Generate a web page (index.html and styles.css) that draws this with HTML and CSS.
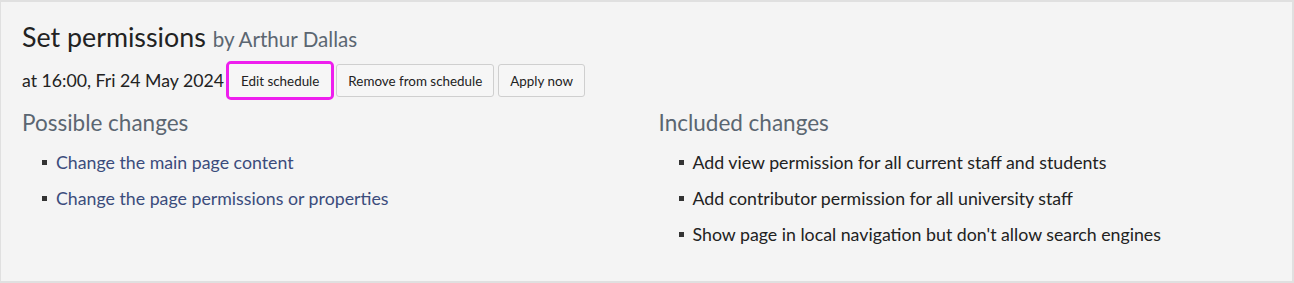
FILE: index.html
```html
<!DOCTYPE html>
<html lang="en">
<head>
<meta charset="utf-8">
<title>Set permissions</title>
<link rel="stylesheet" href="styles.css">
</head>
<body>
<div class="panel">
  <h1 class="title">Set permissions <span class="by">by Arthur Dallas</span></h1>
  <div class="schedule">
    <span class="when">at 16:00, Fri 24 May 2024</span>
    <span class="highlight"><button class="btn">Edit schedule</button></span>
    <button class="btn">Remove from schedule</button>
    <button class="btn">Apply now</button>
  </div>
  <div class="columns">
    <section class="col">
      <h2 class="col-title">Possible changes</h2>
      <ul class="changes">
        <li><a href="#" class="link">Change the main page content</a></li>
        <li><a href="#" class="link">Change the page permissions or properties</a></li>
      </ul>
    </section>
    <section class="col">
      <h2 class="col-title">Included changes</h2>
      <ul class="changes">
        <li>Add view permission for all current staff and students</li>
        <li>Add contributor permission for all university staff</li>
        <li>Show page in local navigation but don't allow search engines</li>
      </ul>
    </section>
  </div>
</div>
</body>
</html>
```

FILE: styles.css
```css
* { box-sizing: border-box; }
html, body { margin: 0; padding: 0; }
body {
  font-family: Lato, "Open Sans", "Liberation Sans", sans-serif;
  color: #222;
  background: #f4f4f4;
}
.panel {
  height: 283px;
  border: 2px solid #e0e0e0;
  border-left-width: 1px;
  background: #f4f4f4;
  padding: 19px 21px 0 21px;
}
.title {
  margin: 0;
  font-size: 26.8px;
  font-weight: 400;
  line-height: 32px;
  color: #222;
}
.by {
  font-size: 20.6px;
  color: #5b6671;
}
.schedule {
  display: flex;
  align-items: center;
  gap: 4px;
  margin-top: 6px;
}
.when {
  font-size: 17.7px;
  margin-right: -2px;
}
.highlight {
  display: inline-flex;
  border: 3px solid #ee1fee;
  border-radius: 5px;
  margin-right: -2px;
}
.highlight .btn { border-color: transparent; border-radius: 2px; padding: 0 11px; }
.btn {
  font-family: Lato, "Open Sans", "Liberation Sans", sans-serif;
  font-size: 13.4px;
  color: #222;
  background: #f6f6f6;
  border: 1px solid #cfcfcf;
  border-radius: 3px;
  height: 33px;
  padding: 0 11px;
  cursor: pointer;
}
.columns {
  display: grid;
  grid-template-columns: 1fr 1fr;
  column-gap: 24px;
  margin-top: 9px;
}
.col-title {
  margin: 0;
  font-size: 22.5px;
  font-weight: 400;
  line-height: 28px;
  color: #5b6671;
}
.changes {
  list-style: none;
  margin: 13px 0 0 0;
  padding-left: 20px;
  font-size: 17.75px;
  line-height: 24px;
}
.changes li {
  display: flex;
  align-items: center;
  gap: 9px;
  margin-bottom: 12px;
}
.changes li::before {
  content: "";
  flex: none;
  width: 5px;
  height: 5px;
  background: #333;
}
.link {
  color: #3b4c7c;
  text-decoration: none;
}
```
